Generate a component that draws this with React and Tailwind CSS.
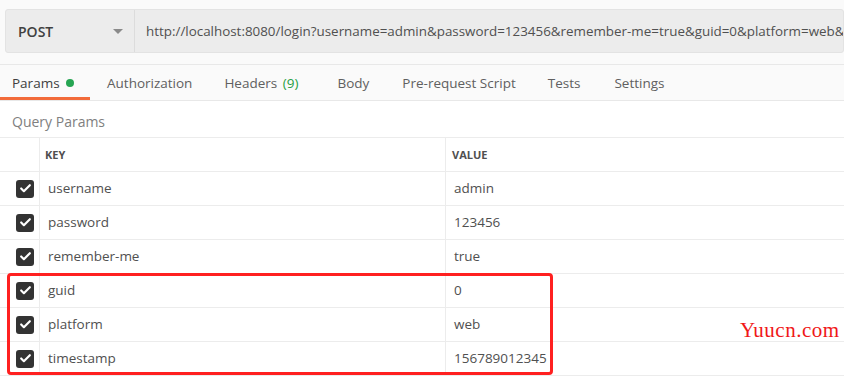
import { Check } from "lucide-react";

const url =
  "http://localhost:8080/login?username=admin&password=123456&remember-me=true&guid=0&platform=web&timestamp=156789012345";

const params = [
  { key: "username", value: "admin" },
  { key: "password", value: "123456" },
  { key: "remember-me", value: "true" },
  { key: "guid", value: "0" },
  { key: "platform", value: "web" },
  { key: "timestamp", value: "156789012345" },
];

function Checkbox() {
  return (
    <div className="w-[18px] h-[18px] rounded-[3px] bg-[#333333] flex items-center justify-center">
      <Check size={13} strokeWidth={4} className="text-white" />
    </div>
  );
}

function App() {
  return (
    <div className="relative w-[850px] h-[387px] overflow-hidden bg-white font-['Open_Sans',sans-serif] text-[#505050]">
      <div className="w-[844px]">
        <div className="h-[64px] bg-[#fafafa] pt-[9px] pl-[5px]">
          <div className="flex h-[44px] bg-[#ececec] border border-[#e3e3e3] rounded-[3px]">
            <div className="w-[129px] flex items-center justify-between pl-[12px] pr-[11px] border-r border-[#dcdcdc]">
              <span className="text-[14px] font-semibold text-[#404040]">POST</span>
              <span className="w-0 h-0 border-l-[5px] border-r-[5px] border-t-[5px] border-l-transparent border-r-transparent border-t-[#8a8a8a]" />
            </div>
            <div className="flex-1 overflow-hidden whitespace-nowrap pl-[11px] flex items-center text-[13.4px] text-[#505050]">
              {url}
            </div>
          </div>
        </div>
        <div className="h-[37px] flex items-stretch border-t border-b border-[#e8e8e8] bg-[#fafafa] text-[13.5px] text-[#606060]">
          <div className="w-[90px] pl-3 flex items-center gap-[6px] border-b-[3px] border-[#f26b3a] pt-[4px] text-[#404040]">
            Params
            <span className="w-[8px] h-[8px] rounded-full bg-[#26a552]" />
          </div>
          <div className="flex items-center ml-[17px] pt-[1px]">
            <span>Authorization</span>
            <span className="ml-[32px]">
              Headers <span className="text-[#26a044] ml-[2px]">(9)</span>
            </span>
            <span className="ml-[39px]">Body</span>
            <span className="ml-[33px]">Pre-request Script</span>
            <span className="ml-[32px]">Tests</span>
            <span className="ml-[34px]">Settings</span>
          </div>
        </div>
        <div className="h-[37px] flex items-center pl-3 pt-[4px] border-b border-[#ececec] text-[14px] text-[#808080]">
          Query Params
        </div>
        <div className="grid grid-cols-[40px_406px_398px]">
          <div className="h-[34px] border-r border-b border-[#ececec]" />
          <div className="h-[34px] border-r border-b border-[#ececec] flex items-center pl-[5px] pt-[2px] text-[11px] font-bold text-[#505050]">
            KEY
          </div>
          <div className="h-[34px] border-b border-[#ececec] flex items-center pl-[6px] pt-[2px] text-[11px] font-bold text-[#505050]">
            VALUE
          </div>
          {params.map((p) => (
            <div key={p.key} className="contents">
              <div className="h-[34px] border-r border-b border-[#ececec] flex items-center justify-end pr-[5px]">
                <Checkbox />
              </div>
              <div className="h-[34px] border-r border-b border-[#ececec] flex items-center pl-[8px] text-[13.5px]">
                {p.key}
              </div>
              <div className="h-[34px] border-b border-[#ececec] flex items-center pl-[8px] text-[13.5px]">
                {p.value}
              </div>
            </div>
          ))}
        </div>
      </div>
      <div className="absolute left-[7px] top-[273px] w-[546px] h-[102px] border-[3px] border-[#ff2020] rounded-[4px]" />
      <div className="absolute left-[740px] top-[320px] text-[21px] leading-none text-[#f01818] font-['Liberation_Serif',serif] tracking-[0.5px]">
        Yuucn.com
      </div>
    </div>
  );
}

export default App;
